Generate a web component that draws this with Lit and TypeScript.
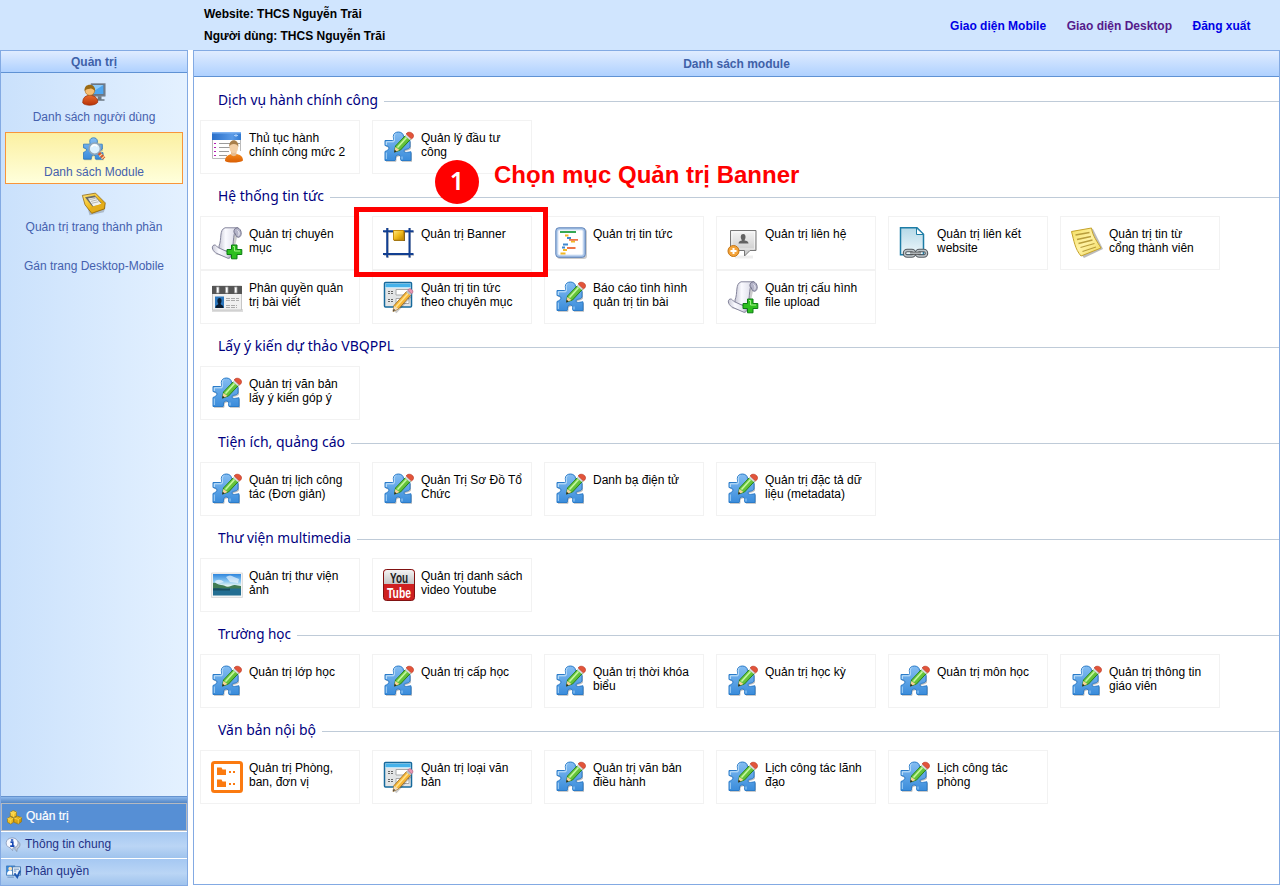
import { LitElement, html, svg, css } from "lit";
import { customElement, property } from "lit/decorators.js";

const defs = svg`<defs>
  <linearGradient id="bl" x1="0" y1="0" x2="0" y2="1"><stop offset="0" stop-color="#84bdf2"/><stop offset="1" stop-color="#3a8cdb"/></linearGradient>
  <linearGradient id="gn" x1="0" y1="0" x2="1" y2="1"><stop offset="0" stop-color="#8be35a"/><stop offset="1" stop-color="#45a81f"/></linearGradient>
  <linearGradient id="or" x1="0" y1="0" x2="0" y2="1"><stop offset="0" stop-color="#f58a1e"/><stop offset="1" stop-color="#d95e04"/></linearGradient>
  <linearGradient id="rd" x1="0" y1="0" x2="0" y2="1"><stop offset="0" stop-color="#e86a2c"/><stop offset="1" stop-color="#b83208"/></linearGradient>
  <linearGradient id="pp" x1="0" y1="0" x2="1" y2="0"><stop offset="0" stop-color="#c9c9d6"/><stop offset=".35" stop-color="#fafaff"/><stop offset=".75" stop-color="#e4e4ee"/><stop offset="1" stop-color="#a9a9bc"/></linearGradient>
  <linearGradient id="gy" x1="0" y1="0" x2="0" y2="1"><stop offset="0" stop-color="#f4f4f4"/><stop offset="1" stop-color="#c4c4c4"/></linearGradient>
  <linearGradient id="go" x1="0" y1="0" x2="1" y2="1"><stop offset="0" stop-color="#ffe680"/><stop offset=".5" stop-color="#f0bb1c"/><stop offset="1" stop-color="#b98200"/></linearGradient>
  <linearGradient id="lb" x1="0" y1="0" x2="0" y2="1"><stop offset="0" stop-color="#b5d9e8"/><stop offset="1" stop-color="#eef7fa"/></linearGradient>
  <linearGradient id="sk" x1="0" y1="0" x2="0" y2="1"><stop offset="0" stop-color="#2f86dd"/><stop offset=".35" stop-color="#8cc9f2"/><stop offset=".55" stop-color="#e6f4f2"/></linearGradient>
  <linearGradient id="note" x1="0" y1="0" x2="1" y2="1"><stop offset="0" stop-color="#f4df62"/><stop offset=".5" stop-color="#fff2a4"/><stop offset="1" stop-color="#efd653"/></linearGradient>
  <linearGradient id="tb" x1="0" y1="0" x2="1" y2="0"><stop offset="0" stop-color="#2a6fc9"/><stop offset=".7" stop-color="#5a9ae6"/><stop offset="1" stop-color="#2f78d0"/></linearGradient>
</defs>`;

const piece = "M2 9.500h7.500c2 0 .8-2 .8-4C10.300-.5 20.500-.5 20.500 5.500c0 2-1.500 4 1 4H27V16c-1.500 3-6 1.500-6 4s4.500 1 7 .8V29.500H18c-1-2 .5-3.500-1-5-1.500-1-4-.5-4.500 1.500-.3 1.500.5 2.500-.5 3.500H2V20.500c2.500-1 4-2 4-3.500S4.500 15 2 14.500z";

const icons: Record<string, unknown> = {
  puzzle: svg`
    <path d=${piece} fill="#0004" transform="translate(1 1.300)"/>
    <path d=${piece} fill="url(#bl)" stroke="#2b7bc8"/>
    <path d="M3.300 14v-3.200h7.500c1.500-2-1-6 2-8.300" fill="none" stroke="#c8e5fb"/><path d="M3.300 28v-6.500M19 28.500v-3" stroke="#a5d2f7" fill="none"/>
    <path d="M22.500 4.500l4.800 4L17.500 19l-6 2 1-6z" fill="url(#gn)" stroke="#27831a"/>
    <path d="M23.500 6.500l-9 10" stroke="#c6f7a0" stroke-width="1.600"/>
    <path d="M12.300 16l4.200 3-5.200 2.200z" fill="#f8d296"/><path d="M11 21.500l.7-2.800 2 1.800z" fill="#222"/>
    <path d="M21.800 4.800l5 4.200 1.500-1.500-4.900-4.500z" fill="#d8dce0"/>
    <path d="M23.200 3c1.200-3.300 8-1.800 7.300 2.500-.2 1.300-1.200 2-2 2.500z" fill="#e2543a" stroke="#b7301c" stroke-width=".6"/>`,
  proc: svg`
    <path d="M1 1h29v26H1z" fill="#fff"/><path d="M1.500 8v19.500h20M29.500 8v12" fill="none" stroke="#bbb"/>
    <path d="M1 1h29v8H1z" fill="url(#tb)"/><path d="M1 1h29v1.500H1z" fill="#7db1f0"/><path d="M23 4.500h4M25 3v3" stroke="#a9cdf8"/>
    <path d="M3 12.500h2M3 16.500h2M3 20.500h2M3 24.500h2" stroke="#b31cb3"/>
    <path d="M8 12.500h21M8 16.500h12M8 20.500h10M8 24.500h8" stroke="#9b9b9b"/>
    <path d="M14 30c0-5 4-6 6-7h6c3 1 6 2 6 6.500-3 2.500-15 2.800-18 .5z" fill="url(#or)"/>
    <path d="M20 21h5.500v3c-1.500 1.500-4 1.500-5.500 0z" fill="#e8bd90"/><ellipse cx="22.800" cy="16.500" rx="4.300" ry="5.500" fill="#f3cfa6"/>
    <path d="M18.300 16c-1-9 10-9 9 0-.7-2-2-3-4.500-3s-4 1-4.500 3z" fill="#a87e4a"/>`,
  scroll: svg`
    <path d="M4 27c8 1 8-20 11-24h14c-4 4-4 22-10 28z" fill="#0003"/>
    <path d="M8 19C11 12 8 3 14 .800h13c-5.500 2.200-4 16-6 24L8 23z" fill="url(#pp)" stroke="#85859c"/>
    <path d="M26.500.800c4.500 1 5 9 1 9.500-3 .3-2.500-4-4.500-5C22.500 3 24 .800 26.500.800z" fill="#b4b4c8" stroke="#77778f"/>
    <path d="M26.500 3.500c2 1 2 4 .8 5" fill="none" stroke="#f3f3fa"/>
    <path d="M3 18c-3.500 1.500-1 7 3 8.500l11 4.800c3.500.3 4-4.800 1-5.800L7 20.500c-1-.5-2-3-4-2.500z" fill="url(#pp)" stroke="#85859c"/>
    <path d="M20.500 18h5.500v4.500h4.800v5H26v4.300h-5.500v-4.300H16v-5h4.500z" fill="#2ec01f" stroke="#0b7d12"/><path d="M22 19.500h1.500v4.500H29" fill="none" stroke="#a1f288"/>`,
  banner: svg`
    <path d="M5 1v30M27 1v30M1 5h30M1 28h30" stroke="#0003" stroke-width="2"/>
    <path d="M4.200 1v29.500M26.500 1v29.500M0 4.200h30.500M0 27h30.500" stroke="#123f91" stroke-width="2"/>
    <path d="M11 4h11v10H11z" fill="#85631c"/><path d="M10.500 3.500h10v9.500h-10z" fill="url(#go)" stroke="#c68d0b"/>`,
  news: svg`
    <rect x="2" y="2" width="30" height="30" rx="3" fill="#0003"/><rect x=".8" y=".8" width="29.500" height="29.500" rx="3" fill="#a9c5e9" stroke="#5d82b8"/>
    <rect x="3" y="3" width="25" height="25" rx="1.500" fill="#fff" stroke="#d7e4f5"/>
    <path d="M5 5h16" stroke="#35a853" stroke-width="2"/><g stroke-width="1.800"><path d="M10 8.500h3.500M16 14.500h4M8 23h4M5.500 26.500h5" stroke="#f2b824"/><path d="M12 11h4M8 17.500h5M7 20.500h3" stroke="#3f87cf"/><path d="M14 12.800h9M12 21h8.500" stroke="#ee7448"/></g>`,
  contact: svg`
    <path d="M8 30h18" stroke="#0001" stroke-width="3"/>
    <path d="M3.500 3.500H29v20h-6l-5.500 5.500v-5.500h-14z" fill="url(#gy)" stroke="#777"/><path d="M5 5h22.500v17H5z" fill="none" stroke="#fff9"/>
    <path d="M11.500 16.500c0-2.200 2-2.500 3.500-3-2-3-1.500-6.500 1.200-6.500s3 3.500 1.300 6.500c2 .5 4 .8 4 3z" fill="#626262"/>
    <circle cx="6.500" cy="24" r="5.500" fill="#f4a43a" stroke="#c67512"/><path d="M6.500 21v6M3.500 24h6" stroke="#fff" stroke-width="2"/>`,
  link: svg`
    <path d="M1.500 .7H18l6.500 6.500v20.500h-23z" fill="url(#lb)" stroke="#1d7da6" stroke-width="1.500"/><path d="M17.500 1v6.500h7z" fill="#fff" stroke="#1d7da6"/>
    <g fill="none" stroke="#555b60" stroke-width="3.500"><rect x="5.500" y="23.500" width="10" height="5.500" rx="2.700"/><rect x="17.500" y="23.500" width="10" height="5.500" rx="2.700"/></g>
    <g fill="none" stroke="#bfc6ca" stroke-width="1.300"><rect x="5.500" y="23.500" width="10" height="5.500" rx="2.700"/><rect x="17.500" y="23.500" width="10" height="5.500" rx="2.700"/><path d="M11 26.300h11" stroke="#555" stroke-width="3"/><path d="M11 26.200h11"/></g>`,
  note: svg`
    <path d="M2 5l20-3 10 20-19 9c-7-8-7-15-11-26z" fill="#0004"/>
    <path d="M.5 4.500L20.500 1c1 8 6 14 9.500 20L10 29C4 22 3 14 .5 4.500z" fill="url(#note)" stroke="#c5a22a"/>
    <path d="M4.500 8l14-2.500M6 12.500L20 9.500M7.500 16.500l14-3.500M9.500 20.500L23.500 16.500M11.500 24.500L25 20" stroke="#b89d3c" stroke-width="1.300"/>`,
  perm: svg`
    <path d="M1 28h31v3H1z" fill="#0002"/><path d="M1.500 5h29v24h-29z" fill="#f0f0f0" stroke="#c6c6c6"/><path d="M1 5h30v8H1z" fill="#555"/>
    <g fill="#fff" stroke="#999" stroke-width=".8"><path d="M5.500 6h2.500v6H5.500zM14.500 6H17v6h-2.500zM23.500 6H26v6h-2.500z"/></g>
    <path d="M4 15.500h9v11.500H4z" fill="#2c77bd"/><path d="M4.500 27c0-3 2-3 3-4-2-3-1-6 1-6s3 3 1 6c1 1 3 1 3 4z" fill="#091c31"/>
    <path d="M15 17.500h13M15 19.500h13M15 24.500h11M15 26.500h11" stroke="#aaa" stroke-dasharray="4 1"/>`,
  form: svg`
    <rect x="1.500" y="1.500" width="27" height="24.500" rx="1" fill="#e3e5e6" stroke="#16699c" stroke-width="1.500"/><path d="M2.500 2.500h25v4h-25z" fill="#46b2ea"/><path d="M2.500 6.500h25" stroke="#bde5fa"/>
    <path d="M13 8.500h13v5.500H13zM13 17.500h13v5H13z" fill="#fff" stroke="#a7a9aa"/><path d="M5 10.500h6M5 12.500h6M5 18.500h6M5 20.500h6" stroke="#666" stroke-dasharray="2 1"/>
    <path d="M12 31L27 15" stroke="#0003" stroke-width="4"/>
    <path d="M23.500 10.500l4.500 3.500L16 27.500l-6 3 1-6z" fill="#f7b637" stroke="#95651c" stroke-width=".8"/><path d="M25 12.500L13 26" stroke="#ffe38d" stroke-width="1.500"/>
    <path d="M11 25l4.500 2.500L10 30.500z" fill="#f4dbb7"/><path d="M10 30.500l.6-2.500 1.700 1z" fill="#222"/><path d="M23 11l4.500 3.500 1.300-1.700-4.300-3.300z" fill="#bcc3c8"/><path d="M24.700 9.300l1-1.300c2-1 5 1.500 4 3.500l-1 1.300z" fill="#e795b0" stroke="#af5b79" stroke-width=".6"/>`,
  photo: svg`
    <path d="M.5 4h31v24.500H.5z" fill="#f4f4f4" stroke="#dedede"/><path d="M2 5h28v21.500H2z" fill="url(#sk)"/>
    <path d="M15 8q4-3 8 0l5 2-1 4-8-1zM4 12q5-3 9 1l-8 2z" fill="#fff9"/>
    <path d="M2 14c3-1 4 2 8 2s5 3 10 1 6 0 10 0v4H2z" fill="#417c55"/><path d="M2 19.500h28v7H2z" fill="#236e92"/><path d="M2 19.500c5-1 10 1 17 0v2H2z" fill="#174d61"/>`,
  folder: svg`
    <rect x="1.500" y="1.500" width="29" height="29" rx="2" fill="#fff" stroke="#fb7a10" stroke-width="3"/>
    <path d="M6 6.500h4.500l1 2H15V14H6zM6 18.500h4.500l1 2H15V26H6z" fill="#fb7a10"/><path d="M18 10h2v2h-2zM22 10h2v2h-2zM18 22h2v2h-2zM22 22h2v2h-2z" fill="#fb7a10"/>`,
  youtube: svg`
    <rect x=".5" y=".5" width="31" height="31" rx="3" fill="#cf2020" stroke="#801212"/><path d="M1 15V4q0-3 3-3h24q3 0 3 3v11z" fill="url(#gy)"/>
    <text x="16" y="13.500" text-anchor="middle" textLength="18" lengthAdjust="spacingAndGlyphs" font-family="Liberation Sans" font-weight="bold" font-size="15" fill="#222">You</text>
    <text x="16" y="28.500" text-anchor="middle" textLength="24" lengthAdjust="spacingAndGlyphs" font-family="Liberation Sans" font-weight="bold" font-size="15" fill="#fff">Tube</text>`,
  user: svg`
    <path d="M12 2h19v17H12z" fill="#6b7785" stroke="#8d98a5"/><path d="M14 4h14.500v12H14z" fill="#4ea6f0"/><path d="M14 4h14.500L16 12z" fill="#8ccaf9"/><path d="M21 19h5v4h4v2H19v-2h2z" fill="#6c7883"/>
    <path d="M1 28c0-7 3-9 7-10h5c4 1 8 3 8 9-3 5-17 5-20 1z" fill="url(#rd)" stroke="#9c2d05"/><circle cx="10.500" cy="11.500" r="6.300" fill="#f6bf74" stroke="#b87524"/>
    <path d="M3.500 12c-1.500-11 15-11 14 0-3-3-5-4-7-3-3 0-5 1-7 3z" fill="#9b6b14"/>`,
  search: svg`
    <path d=${piece} fill="#0003" transform="translate(1 1.500)"/><path d=${piece} fill="url(#bl)" stroke="#2674bd"/>
    <circle cx="17" cy="15.500" r="7.500" fill="#dcf1ff" stroke="#8fa6b9" stroke-width="2"/><path d="M12.500 13.500q3.500-5 8-1" fill="none" stroke="#fff" stroke-width="2"/><path d="M22.500 21.500l7 7" stroke="#d9552c" stroke-width="4.500"/><path d="M23 26l4-3.500M26 29l4-3.500" stroke="#f7e09d" stroke-width="1.500"/>`,
  tray: svg`
    <path d="M4 9l15-5 12 17-2 6-19 4z" fill="#0003"/>
    <path d="M.5 4.500L18 1.500l13 13-1 8-17 6L4 17z" fill="url(#go)" stroke="#8d6207"/><path d="M4 7L17 4.500l9 10-12 5z" fill="#6c6c64"/><path d="M8 8.500L18 7l8 9-11 3z" fill="#f1f1ee"/><path d="M10 10l8-1.500M12 12.500l8-2M13 15l9-2" stroke="#a3a39d"/>
    <path d="M11 20.500l15-4.500 4-2-1 8-16 5z" fill="#e4ad1b"/>`,
  boxes: svg`<g stroke="#94720a" stroke-width="1.300" fill="url(#go)"><path d="M7 5l6-4 7 3v9l-6 3-7-3zM1 18l6-4 7 3v9l-6 4-7-4zM15 17l7-4 9 3v9l-7 5-9-4z"/></g><path d="M7 5l7 3 6-4M14 8v7M1 18l7 3 6-4M8 21v8M15 17l9 3 7-4M24 20v9" fill="none" stroke="#ffe35a" stroke-width="1.500"/>`,
  info: svg`<path d="M18 8c13-1 16 12 6 17l-1 6-4-5z" fill="#c0cad9" stroke="#65738b"/><path d="M13 2c16 0 17 20 2 21l-1 6-5-6C-4 20-2 2 13 2z" fill="#f7f9ff" stroke="#7b8db0" stroke-width="1.500"/><path d="M10.500 6.500h5M9.500 11h5v8M9 19.500h9" stroke="#1546b3" stroke-width="3.500" fill="none"/>`,
  rights: svg`<path d="M1 4h18v20H1z" fill="#3689de" stroke="#235e9e"/><circle cx="9" cy="10" r="4" fill="#fce0b4"/><path d="M2 23c0-12 14-12 14 0z" fill="#fff"/><path d="M14 6h17v18H14z" fill="#eaf3fc" stroke="#4576ad" stroke-width="2"/><path d="M17 11h11M17 15h5M3 28h14" stroke="#6a90bd" stroke-width="2"/><path d="M18 20l6 8 6-14" fill="none" stroke="#1d57b0" stroke-width="4"/>`,
};

@customElement("app-icon")
class AppIcon extends LitElement {
  @property() name = "";
  static styles = css`:host{display:block;width:32px;height:32px}svg{display:block;width:100%;height:100%;overflow:visible}`;
  render() {
    return html`<svg viewBox="0 0 32 32">${defs}${icons[this.name]}</svg>`;
  }
}

type Module = [icon: string, first: string, second?: string];
const sections: { title: string; width: number; items: Module[] }[] = [
  { title: "Dịch vụ hành chính công", width: 160, items: [["proc", "Thủ tục hành", "chính công mức 2"], ["puzzle", "Quản lý đầu tư", "công"]] },
  { title: "Hệ thống tin tức", width: 106, items: [
    ["scroll", "Quản trị chuyên", "mục"], ["banner", "Quản trị Banner"], ["news", "Quản trị tin tức"], ["contact", "Quản trị liên hệ"], ["link", "Quản trị liên kết", "website"], ["note", "Quản trị tin từ", "cổng thành viên"],
    ["perm", "Phân quyền quản", "trị bài viết"], ["form", "Quản trị tin tức", "theo chuyên mục"], ["puzzle", "Báo cáo tình hình", "quản trị tin bài"], ["scroll", "Quản trị cấu hình", "file upload"]] },
  { title: "Lấy ý kiến dự thảo VBQPPL", width: 176, items: [["puzzle", "Quản trị văn bản", "lấy ý kiến góp ý"]] },
  { title: "Tiện ích, quảng cáo", width: 127, items: [["puzzle", "Quản trị lịch công", "tác (Đơn giản)"], ["puzzle", "Quản Trị Sơ Đồ Tổ", "Chức"], ["puzzle", "Danh bạ điện tử"], ["puzzle", "Quản trị đặc tả dữ", "liệu (metadata)"]] },
  { title: "Thư viện multimedia", width: 133, items: [["photo", "Quản trị thư viện", "ảnh"], ["youtube", "Quản trị danh sách", "video Youtube"]] },
  { title: "Trường học", width: 73, items: [["puzzle", "Quản trị lớp học"], ["puzzle", "Quản trị cấp học"], ["puzzle", "Quản trị thời khóa", "biểu"], ["puzzle", "Quản trị học kỳ"], ["puzzle", "Quản trị môn học"], ["puzzle", "Quản trị thông tin", "giáo viên"]] },
  { title: "Văn bản nội bộ", width: 98, items: [["folder", "Quản trị Phòng,", "ban, đơn vị"], ["form", "Quản trị loại văn", "bản"], ["puzzle", "Quản trị văn bản", "điều hành"], ["puzzle", "Lịch công tác lãnh", "đạo"], ["puzzle", "Lịch công tác", "phòng"]] },
];

@customElement("app-root")
class AppRoot extends LitElement {
  static styles = css`
    :host{display:block;position:relative;width:1280px;height:891px;overflow:hidden;background:#fff;font:12px/14px "Liberation Sans",Arial,sans-serif;color:#000}
    *{box-sizing:border-box}
    header{height:50px;background:#d0e5fe;display:flex;justify-content:space-between;padding:3px 29px 0 204px;font-weight:bold;line-height:22px}
    nav{display:flex;gap:20.500px;padding-top:12px;color:#0000e6}
    nav span:last-child{padding-right:.5px}
    .visited{color:#551a8b}
    .body{display:flex;gap:5px;height:836px}
    aside{width:188px;border:1px solid #83aae3;display:flex;flex-direction:column;background:linear-gradient(90deg,#cae1fc,#e4f1ff)}
    .title{height:22px;line-height:22px;flex:none;text-align:center;font-weight:bold;color:#3f61a8;background:linear-gradient(#e0ecff,#afd1ff);border-bottom:1px solid #5f92d4}
    .side{flex:1;padding:4px;display:flex;flex-direction:column;gap:3px;color:#4561ae}
    .entry{height:52px;flex:none;display:flex;flex-direction:column;align-items:center;padding-top:4px;border:1px solid transparent}
    .entry app-icon{width:24px;height:24px;margin-bottom:4px}
    .entry.on{background:linear-gradient(#fbf0a2,#ffffdc);border-color:#f8953a}
    .entry.plain{padding-top:16px}
    .split{height:7px;flex:none;border-top:1px solid #6593cf;background:linear-gradient(#8db8ec,#5286c6)}
    .tab{height:27px;flex:none;display:flex;align-items:center;gap:4px;padding:0 5px 3px;color:#1e3287;background:linear-gradient(#a5c8f2,#bad5f5 55%,#9fc3ed);border-top:1px solid #fff}
    .tab app-icon{width:15px;height:15px;margin-top:2px}
    .tab.on{height:28px;background:#568fd5;color:#fff;border:1px solid #b5b9c0;padding-bottom:2px;-webkit-text-stroke:.2px #fff}
    main{width:1087px;border:1px solid #83aae3;height:835px}
    main .title{height:26px;line-height:26px}
    .sections{padding:15px 0 0 6px}
    section{padding-bottom:14px}
    .head{display:flex;align-items:center;height:18px;margin-bottom:10px;padding-left:18px;gap:6px}
    .head svg{display:block;height:18px;flex:none;overflow:visible}
    .head text{font:15px "Noto Sans","Open Sans",sans-serif;fill:#000080}
    .rule{flex:1;height:1px;background:#bfcbd8}
    .grid{display:grid;grid-template-columns:repeat(6,160px);column-gap:12px}
    .card{height:54px;border:1px solid #f2f2f2;display:flex;gap:6px;padding:10px 0 0 10px}
    .card app-icon{flex:none}
    .card span{white-space:nowrap}
    .box{position:absolute;left:354px;top:207px;width:194px;height:70px;border:5px solid #f00}
    .badge{position:absolute;left:435px;top:160px;width:44px;height:44px;border-radius:50%;background:#f00;color:#fff;font:600 25px/40px "Noto Sans","Open Sans",sans-serif;text-align:center}
    .callout{position:absolute;left:494px;top:161px;font:bold 24px/28px "Liberation Sans",Arial,sans-serif;color:#f00;white-space:nowrap}
  `;
  render() {
    return html`
      <header><div><div>Website: THCS Nguyễn Trãi</div><div>Người dùng: THCS Nguyễn Trãi</div></div>
        <nav><span>Giao diện Mobile</span><span class="visited">Giao diện Desktop</span><span>Đăng xuất</span></nav></header>
      <div class="body">
        <aside>
          <div class="title">Quản trị</div>
          <div class="side">
            <div class="entry"><app-icon name="user"></app-icon>Danh sách người dùng</div>
            <div class="entry on"><app-icon name="search"></app-icon>Danh sách Module</div>
            <div class="entry"><app-icon name="tray"></app-icon>Quản trị trang thành phần</div>
            <div class="entry plain">Gán trang Desktop-Mobile</div>
          </div>
          <div class="split"></div>
          <div class="tab on"><app-icon name="boxes"></app-icon>Quản trị</div>
          <div class="tab"><app-icon name="info"></app-icon>Thông tin chung</div>
          <div class="tab"><app-icon name="rights"></app-icon>Phân quyền</div>
        </aside>
        <main>
          <div class="title">Danh sách module</div>
          <div class="sections">
            ${sections.map((s) => html`<section>
              <div class="head"><svg width=${s.width} height="18"><text x="0" y="13" textLength=${s.width} lengthAdjust="spacingAndGlyphs">${s.title}</text></svg><div class="rule"></div></div>
              <div class="grid">${s.items.map(([icon, a, b]) => html`<div class="card"><app-icon name=${icon}></app-icon><span>${a}${b ? html`<br />${b}` : ""}</span></div>`)}</div>
            </section>`)}
          </div>
        </main>
      </div>
      <div class="box"></div><div class="badge">1</div><div class="callout">Chọn mục Quản trị Banner</div>`;
  }
}
